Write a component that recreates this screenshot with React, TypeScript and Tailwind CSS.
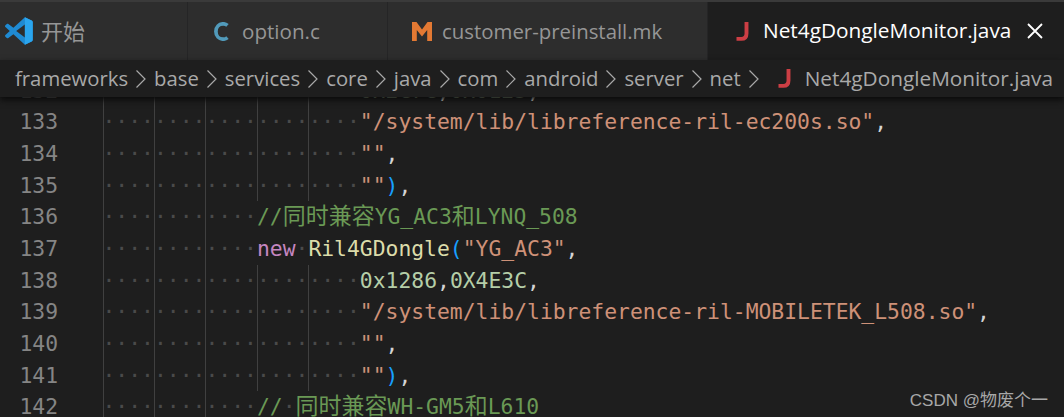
import React from 'react';

const mono = "font-['DejaVu_Sans_Mono','Noto_Sans_CJK_SC',monospace]";

function VscodeLogo() {
  return (
    <svg width="28" height="28" viewBox="0 0 100 100" className="shrink-0">
      <path d="M71 99l24-11.600c2.500-1.200 4-3.600 4-6.300V19c0-2.700-1.500-5.100-4-6.300L71 1 30 38.500 12 24.800c-1.700-1.300-4-1.200-5.500.2L1.400 29.600c-1.800 1.700-1.800 4.500 0 6.100L17 50 1.400 64.300c-1.800 1.600-1.800 4.400 0 6.100l5.100 4.600c1.500 1.400 3.800 1.500 5.500.2L30 61.500 71 99z" fill="#1f8ad2" />
      <path d="M71 27 40 50l31 23V27z" fill="#2d2d2d" />
      <path d="M71 1l24 11.700c2.500 1.200 4 3.600 4 6.300v62c0 2.700-1.500 5.100-4 6.300L71 99V1z" fill="#2aa5ee" />
    </svg>
  );
}

function CIcon() {
  return (
    <svg width="15" height="19" viewBox="0 0 15 19" className="shrink-0">
      <path d="M13.500 3.400C12.300 2.400 10.900 1.800 9.300 1.800 5 1.800 1.900 5 1.900 9.500s3.100 7.700 7.400 7.700c1.600 0 3-.6 4.200-1.600" fill="none" stroke="#519aba" strokeWidth="3.700" />
    </svg>
  );
}

function MIcon() {
  return (
    <svg width="20" height="19" viewBox="0 0 20 19" className="shrink-0">
      <path d="M0 0h4.500L10 7.500 15.500 0H20v19h-4.800V8L10 14.500 4.800 8v11H0z" fill="#e37933" />
    </svg>
  );
}

function JIcon() {
  return (
    <svg width="14" height="19" viewBox="0 0 14 19" className="shrink-0">
      <path d="M10.500 0v11.500c0 3.500-2 5.400-5.200 5.400H0.500" fill="none" stroke="#cc3e44" strokeWidth="3.900" />
    </svg>
  );
}

function Chevron() {
  return (
    <svg width="26" height="20" viewBox="0 0 26 20" className="shrink-0">
      <path d="M8.500 1.500 17 10l-8.500 8.500" fill="none" stroke="#a9a9a9" strokeWidth="1.200" />
    </svg>
  );
}

function Tab({ icon, label, width, textSize }: { icon: React.ReactNode; label: string; width: string; textSize: string }) {
  return (
    <div className={`flex h-full shrink-0 items-center border-r border-[#252526] bg-[#2d2d2d] ${width}`}>
      {icon}
      <span className={`${textSize} text-[#969696]`}>{label}</span>
    </div>
  );
}

function Ws({ n }: { n: number }) {
  return <span className="text-[#4a4a4a]">{'·'.repeat(n)}</span>;
}

function Line({ no, guides = 5, indent = 5, children }: { no: number; guides?: number; indent?: number; children?: React.ReactNode }) {
  return (
    <div className="flex h-[31.7px] items-center whitespace-pre">
      <div className="w-[58px] shrink-0 text-right text-[#858585]">{no}</div>
      <div className="w-[44.5px] shrink-0" />
      {Array.from({ length: indent }).map((_, i) => (
        <div
          key={i}
          className={`flex h-full w-[51.48px] shrink-0 items-center ${i < guides ? 'shadow-[inset_1px_0_0_#404040]' : ''}`}
        >
          <Ws n={4} />
        </div>
      ))}
      <div>{children}</div>
    </div>
  );
}

const Str = ({ children }: { children: React.ReactNode }) => <span className="text-[#ce9178]">{children}</span>;
const Punc = ({ children }: { children: React.ReactNode }) => <span className="text-[#d4d4d4]">{children}</span>;
const Paren = ({ children }: { children: React.ReactNode }) => <span className="text-[#179fff]">{children}</span>;
const Num = ({ children }: { children: React.ReactNode }) => <span className="text-[#b5cea8]">{children}</span>;
const Comment = ({ children }: { children: React.ReactNode }) => <span className="text-[#6a9955]">{children}</span>;
const Cjk = ({ children }: { children: React.ReactNode }) => <span className="text-[23px]">{children}</span>;

const crumbs = ['frameworks', 'base', 'services', 'core', 'java', 'com', 'android', 'server', 'net'];

export default function App() {
  return (
    <div className="relative h-[417px] w-[1064px] overflow-hidden bg-[#1e1e1e] font-['Open_Sans','Noto_Sans_CJK_SC',sans-serif]">
      <div className="relative z-10 flex h-[60px] border-t-2 border-[#3a3a3a] bg-[#252526]">
        <Tab
          width="w-[188px]"
          textSize="text-[22px]"
          label="开始"
          icon={<span className="ml-[5px] mr-[8px] flex"><VscodeLogo /></span>}
        />
        <Tab
          width="w-[200px]"
          textSize="text-[20.6px]"
          label="option.c"
          icon={<span className="ml-[26px] mr-[13px] flex"><CIcon /></span>}
        />
        <Tab
          width="w-[320px]"
          textSize="text-[20.4px]"
          label="customer-preinstall.mk"
          icon={<span className="ml-[24px] mr-[10px] flex"><MIcon /></span>}
        />
        <div className="flex h-full flex-1 items-center bg-[#1e1e1e]">
          <span className="ml-[28px] mr-[13px] flex"><JIcon /></span>
          <span className="text-[20.8px] text-white">Net4gDongleMonitor.java</span>
          <svg width="16" height="16" viewBox="0 0 16 16" className="ml-[16px] shrink-0">
            <path d="M1 1l14 14M15 1 1 15" stroke="#fff" strokeWidth="1.800" fill="none" />
          </svg>
        </div>
      </div>

      <div className="relative z-10 flex h-[37px] items-center bg-[#1e1e1e] pl-[15px] text-[20.3px] text-[#a9a9a9] shadow-[0_3px_6px_#0b0b0b]">
        {crumbs.map((c) => (
          <React.Fragment key={c}>
            <span>{c}</span>
            <Chevron />
          </React.Fragment>
        ))}
        <span className="ml-[11px] mr-[13px] flex"><JIcon /></span>
        <span className="text-[20.8px]">Net4gDongleMonitor.java</span>
      </div>

      <div className={`${mono} mt-[-22.5px] text-[21.37px] leading-[31.7px]`}>
        <Line no={132}>
          <Num>0x2C7C</Num>
          <Punc>,</Punc>
          <Num>0x0125</Num>
          <Punc>,</Punc>
        </Line>
        <Line no={133}>
          <Str>"/system/lib/libreference-ril-ec200s.so"</Str>
          <Punc>,</Punc>
        </Line>
        <Line no={134}>
          <Str>""</Str>
          <Punc>,</Punc>
        </Line>
        <Line no={135}>
          <Str>""</Str>
          <Paren>)</Paren>
          <Punc>,</Punc>
        </Line>
        <Line no={136} guides={3} indent={3}>
          <Comment>//<Cjk>同时兼容</Cjk>YG_AC3<Cjk>和</Cjk>LYNQ_508</Comment>
        </Line>
        <Line no={137} guides={3} indent={3}>
          <span className="text-[#c586c0]">new</span>
          <Ws n={1} />
          <span className="text-[#dcdcaa]">Ril4GDongle</span>
          <Paren>(</Paren>
          <Str>"YG_AC3"</Str>
          <Punc>,</Punc>
        </Line>
        <Line no={138}>
          <Num>0x1286</Num>
          <Punc>,</Punc>
          <Num>0X4E3C</Num>
          <Punc>,</Punc>
        </Line>
        <Line no={139}>
          <Str>"/system/lib/libreference-ril-MOBILETEK_L508.so"</Str>
          <Punc>,</Punc>
        </Line>
        <Line no={140}>
          <Str>""</Str>
          <Punc>,</Punc>
        </Line>
        <Line no={141}>
          <Str>""</Str>
          <Paren>)</Paren>
          <Punc>,</Punc>
        </Line>
        <Line no={142} guides={3} indent={3}>
          <Comment>//</Comment>
          <Ws n={1} />
          <Comment><Cjk>同时兼容</Cjk>WH-GM5<Cjk>和</Cjk>L610</Comment>
        </Line>
      </div>

      <div className="absolute bottom-[4px] right-[16px] font-['Liberation_Sans','Noto_Sans_CJK_SC',sans-serif] text-[17px] text-[#a8a8a8]">
        CSDN @物废个一
      </div>
    </div>
  );
}
